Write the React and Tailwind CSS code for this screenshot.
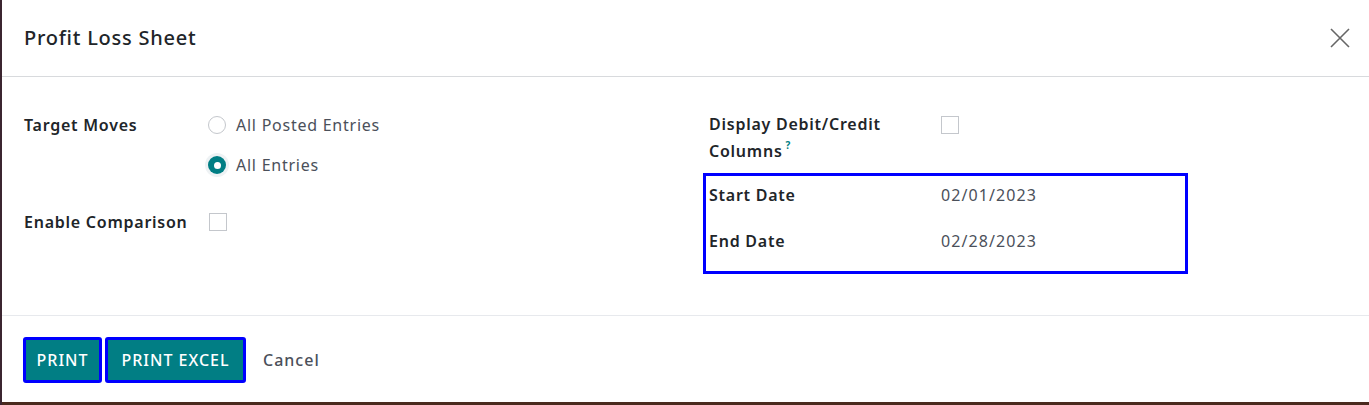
export default function App() {
  const font = { fontFamily: '"Noto Sans", "Open Sans", sans-serif' };
  return (
    <div className="w-[1369px] h-[405px] bg-[#4a2a1e] flex" style={font}>
      <div className="w-[2px] bg-[#3b2530]" />
      <div className="flex-1 h-[402px] bg-white flex flex-col">
        {/* header */}
        <div className="h-[77px] border-b border-[#d8dadd] flex items-center justify-between pl-[22px] pr-[18px]">
          <h1 className="text-[20px] font-medium text-[#212529] leading-none tracking-[0.75px]">Profit Loss Sheet</h1>
          <svg width="22" height="22" viewBox="0 0 22 22" className="text-[#666]">
            <path d="M2 2 L20 20 M20 2 L2 20" stroke="currentColor" strokeWidth="1.6" />
          </svg>
        </div>
        {/* body */}
        <div className="h-[239px] border-b border-[#e7e9ed] pt-[36px] pl-[22px] flex tracking-[0.75px]">
          <div className="w-[685px] flex flex-col">
            <div className="flex">
              <div className="w-[184px] text-[16px] leading-[24px] font-semibold text-[#212529]">Target Moves</div>
              <div className="flex flex-col gap-[16px]">
                <label className="flex items-center gap-[10px] text-[16px] leading-[24px] text-[#4b505a]">
                  <span className="w-[18px] h-[18px] rounded-full border border-[#c4c7cc] bg-white" />
                  All Posted Entries
                </label>
                <label className="flex items-center gap-[10px] text-[16px] leading-[24px] text-[#4b505a]">
                  <span className="w-[18px] h-[18px] rounded-full bg-[#017e84] flex items-center justify-center ring-[3px] ring-[#eef2f4]">
                    <span className="w-[7px] h-[7px] rounded-full bg-white" />
                  </span>
                  All Entries
                </label>
              </div>
            </div>
            <div className="flex mt-[33px] items-center">
              <div className="w-[184px] text-[16px] leading-[24px] font-semibold text-[#212529]">Enable Comparison</div>
              <span className="ml-[1px] w-[18px] h-[18px] border border-[#c4c7cc] bg-white" />
            </div>
          </div>
          <div className="flex flex-col">
            <div className="flex -mt-[2px]">
              <div className="w-[232px] text-[16px] leading-[27px] font-semibold text-[#212529]">
                Display Debit/Credit<br />Columns<sup className="text-[#017e84] text-[10px] font-bold ml-[3px] -top-[8px]">?</sup>
              </div>
              <span className="mt-[5px] w-[18px] h-[18px] border border-[#c4c7cc] bg-white" />
            </div>
            <div className="-ml-[6px] mt-[8px] w-[485px] h-[101px] border-[3px] border-[#0000ff] pt-[7px] pl-[3px] flex flex-col gap-[22px]">
              <div className="flex">
                <div className="w-[232px] text-[16px] leading-[24px] font-semibold text-[#212529]">Start Date</div>
                <div className="text-[16px] leading-[24px] text-[#4b505a] tracking-[1.1px]">02/01/2023</div>
              </div>
              <div className="flex">
                <div className="w-[232px] text-[16px] leading-[24px] font-semibold text-[#212529]">End Date</div>
                <div className="text-[16px] leading-[24px] text-[#4b505a] tracking-[1.1px]">02/28/2023</div>
              </div>
            </div>
          </div>
        </div>
        {/* footer */}
        <div className="flex items-start pt-[21px] pl-[21px] gap-[3px] tracking-[1px]">
          <button className="w-[79px] h-[46px] border-[3px] border-[#0000ff] rounded-[3px] bg-[#017e84] text-white text-[16px] font-medium uppercase">PRINT</button>
          <button className="w-[141px] h-[46px] border-[3px] border-[#0000ff] rounded-[3px] bg-[#017e84] text-white text-[16px] font-medium uppercase">PRINT EXCEL</button>
          <button className="h-[46px] pl-[14px] text-[16px] font-medium text-[#4b505a]">Cancel</button>
        </div>
      </div>
    </div>
  );
}
